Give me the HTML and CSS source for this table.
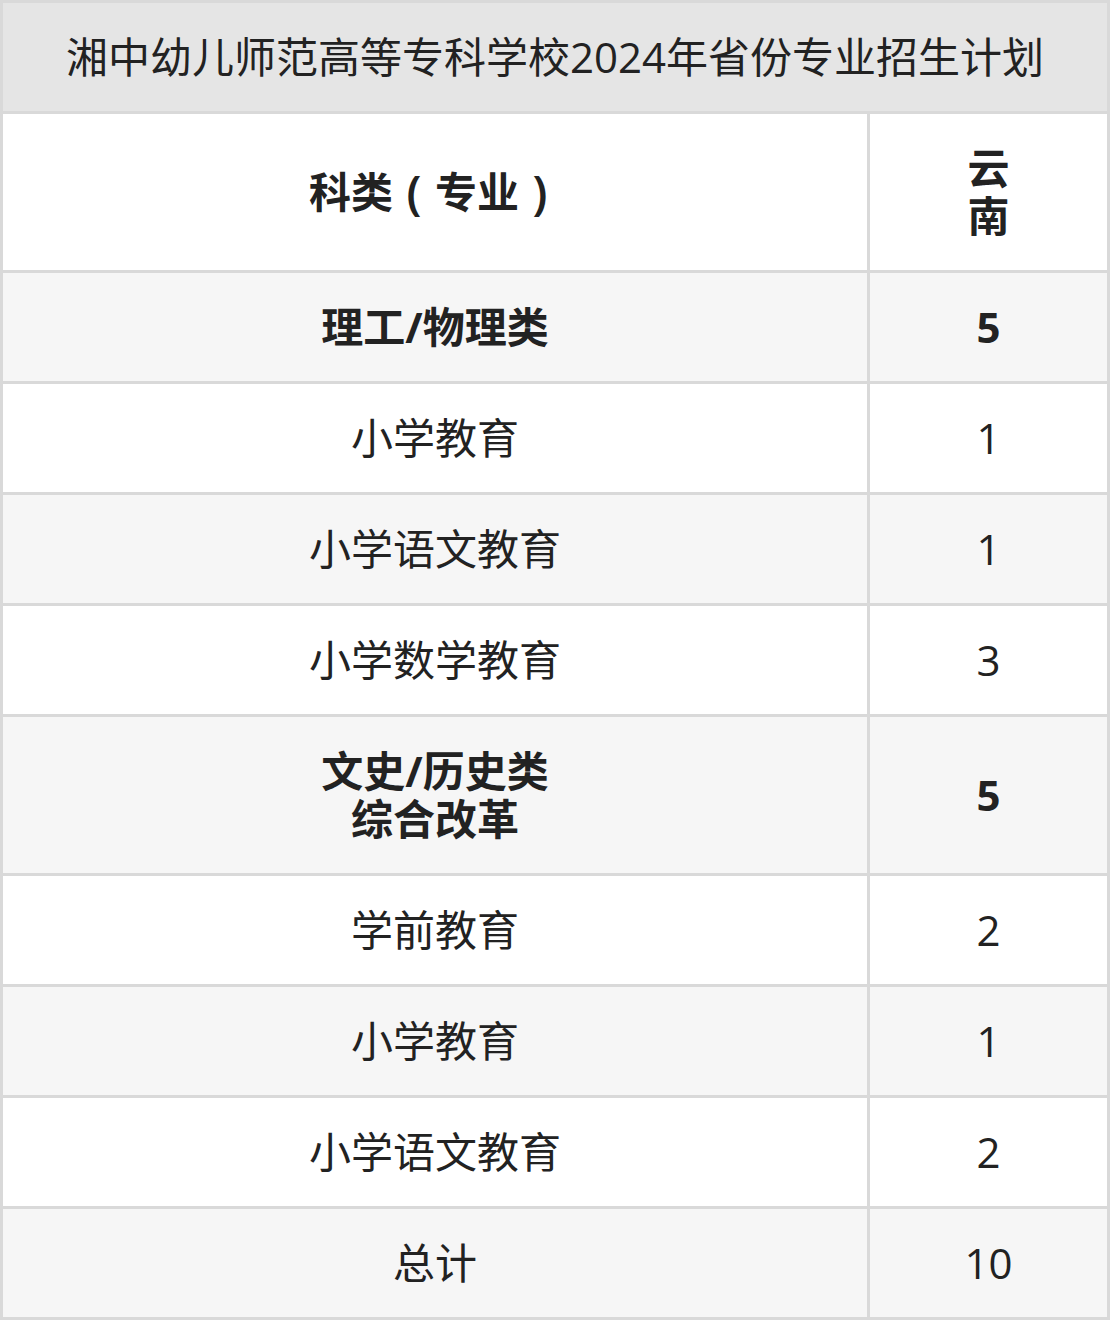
FILE: index.html
```html
<!DOCTYPE html>
<html lang="zh-CN">
<head>
<meta charset="utf-8">
<title>湘中幼儿师范高等专科学校2024年省份专业招生计划</title>
<link rel="stylesheet" href="styles.css">
</head>
<body>
<div class="plan">
  <div class="cell title">湘中幼儿师范高等专科学校2024年省份专业招生计划</div>
  <div class="cell head">科类<span class="paren">(</span>专业<span class="paren">)</span></div>
  <div class="cell head">云<br>南</div>

  <div class="cell alt bold">理工/物理类</div>
  <div class="cell alt bold">5</div>

  <div class="cell">小学教育</div>
  <div class="cell">1</div>

  <div class="cell alt">小学语文教育</div>
  <div class="cell alt">1</div>

  <div class="cell">小学数学教育</div>
  <div class="cell">3</div>

  <div class="cell alt bold">文史/历史类<br>综合改革</div>
  <div class="cell alt bold">5</div>

  <div class="cell">学前教育</div>
  <div class="cell">2</div>

  <div class="cell alt">小学教育</div>
  <div class="cell alt">1</div>

  <div class="cell">小学语文教育</div>
  <div class="cell">2</div>

  <div class="cell alt">总计</div>
  <div class="cell alt">10</div>
</div>
</body>
</html>
```

FILE: styles.css
```css
html, body {
  margin: 0;
  padding: 0;
  background: #ffffff;
}

.plan {
  width: 1110px;
  box-sizing: border-box;
  display: grid;
  grid-template-columns: 864px 237px;
  gap: 3px;
  padding: 3px;
  background: #d9d9d9;
  font-family: "Open Sans", "Noto Sans CJK SC", sans-serif;
  font-size: 42px;
  line-height: 48px;
  color: #222222;
}

.cell {
  display: flex;
  align-items: center;
  justify-content: center;
  text-align: center;
  padding: 30px 0;
  background: #ffffff;
}

.title {
  grid-column: 1 / 3;
  background: #e5e5e5;
}

.head {
  font-weight: bold;
}

.paren {
  display: inline-block;
  width: 42px;
  text-align: center;
  font-family: "Noto Sans", sans-serif;
  font-size: 46px;
  font-weight: 600;
  line-height: 48px;
}

.alt {
  background: #f6f6f6;
}

.bold {
  font-weight: bold;
}
```
